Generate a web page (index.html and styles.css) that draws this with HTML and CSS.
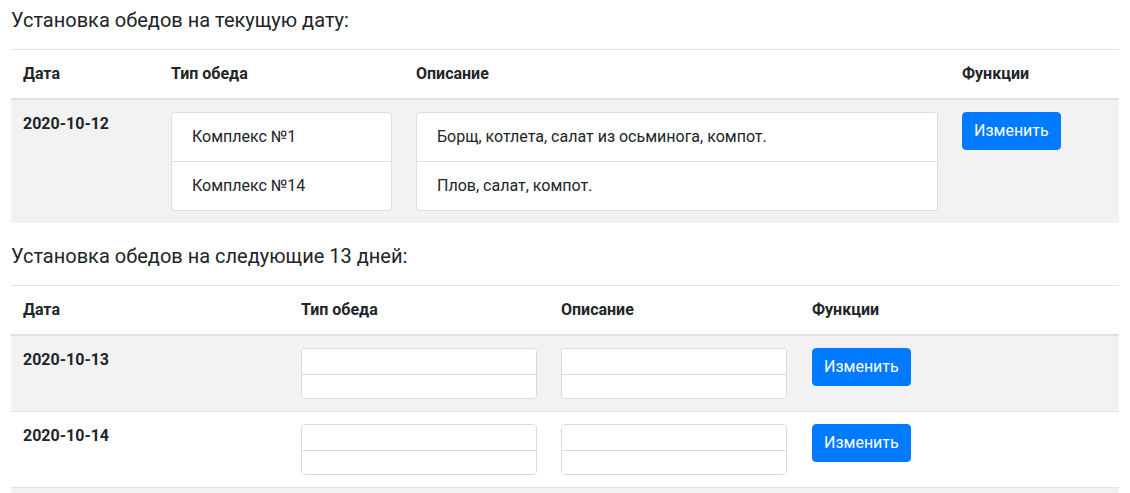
FILE: index.html
```html
<!DOCTYPE html>
<html lang="ru">
<head>
<meta charset="utf-8">
<link rel="stylesheet" href="styles.css">
</head>
<body>
<div class="container">
  <p class="title">Установка обедов на текущую дату:</p>
  <table class="table striped t1">
    <thead>
      <tr>
        <th class="c1">Дата</th>
        <th class="c2">Тип обеда</th>
        <th class="c3">Описание</th>
        <th class="c4">Функции</th>
      </tr>
    </thead>
    <tbody>
      <tr>
        <td class="date">2020-10-12</td>
        <td>
          <ul class="list-group">
            <li class="list-item">Комплекс №1</li>
            <li class="list-item">Комплекс №14</li>
          </ul>
        </td>
        <td>
          <ul class="list-group">
            <li class="list-item">Борщ, котлета, салат из осьминога, компот.</li>
            <li class="list-item">Плов, салат, компот.</li>
          </ul>
        </td>
        <td><button class="btn">Изменить</button></td>
      </tr>
    </tbody>
  </table>

  <p class="title">Установка обедов на следующие 13 дней:</p>
  <table class="table striped t2">
    <thead>
      <tr>
        <th class="c1">Дата</th>
        <th class="c2">Тип обеда</th>
        <th class="c3">Описание</th>
        <th class="c4">Функции</th>
      </tr>
    </thead>
    <tbody>
      <tr>
        <td class="date">2020-10-13</td>
        <td><div class="input-group w-type"><input type="text" class="field"><input type="text" class="field"></div></td>
        <td><div class="input-group w-desc"><input type="text" class="field"><input type="text" class="field"></div></td>
        <td><button class="btn">Изменить</button></td>
      </tr>
      <tr>
        <td class="date">2020-10-14</td>
        <td><div class="input-group w-type"><input type="text" class="field"><input type="text" class="field"></div></td>
        <td><div class="input-group w-desc"><input type="text" class="field"><input type="text" class="field"></div></td>
        <td><button class="btn">Изменить</button></td>
      </tr>
      <tr class="next-row">
        <td></td>
        <td></td>
        <td></td>
        <td></td>
      </tr>
    </tbody>
  </table>
</div>
</body>
</html>
```

FILE: styles.css
```css
* { box-sizing: border-box; }
html, body { margin: 0; padding: 0; background: #fff; }
body {
  font-family: Roboto, "Liberation Sans", sans-serif;
  font-size: 16px;
  line-height: 24px;
  color: #212529;
}
.container {
  padding: 5px 11px 0 11px;
}
.title {
  margin: 0 0 14px 0;
  font-size: 20px;
  line-height: 30px;
  font-weight: 400;
}
.table {
  width: 100%;
  border-collapse: collapse;
  margin-bottom: 18px;
}
.table th, .table td {
  padding: 12px;
  text-align: left;
  vertical-align: top;
  border-top: 1px solid #dee2e6;
}
.table thead th {
  font-weight: 700;
  border-bottom: 2px solid #dee2e6;
}
.striped tbody tr:nth-child(odd) { background: #f2f2f2; }
.next-row td { height: 48px; }
.date { font-weight: 700; }

.t1 .c1 { width: 148px; }
.t1 .c2 { width: 245px; }
.t1 .c3 { width: 546px; }
.t2 .c1 { width: 278px; }
.t2 .c2 { width: 260px; }
.t2 .c3 { width: 251px; }

.list-group {
  list-style: none;
  margin: 0;
  padding: 0;
  background: #fff;
  border: 1px solid rgba(0,0,0,.125);
  border-radius: 4px;
}
.list-item {
  padding: 12px 20px;
  line-height: 24px;
}
.list-item + .list-item { border-top: 1px solid rgba(0,0,0,.125); }

.input-group {
  display: flex;
  flex-direction: column;
  background: #fff;
  border: 1px solid #dadada;
  border-radius: 4px;
  overflow: hidden;
}
.w-type { width: 236px; }
.w-desc { width: 226px; }
.field {
  display: block;
  width: 100%;
  height: 25px;
  border: 0;
  margin: 0;
  padding: 0 6px;
  background: #fff;
  font: inherit;
}
.field + .field { border-top: 1px solid #dadada; height: 24px; }

.btn {
  display: inline-block;
  font-family: inherit;
  font-size: 16px;
  line-height: 24px;
  padding: 6px 11px;
  color: #fff;
  background: #007bff;
  border: 1px solid #007bff;
  border-radius: 4px;
  cursor: pointer;
}
```
